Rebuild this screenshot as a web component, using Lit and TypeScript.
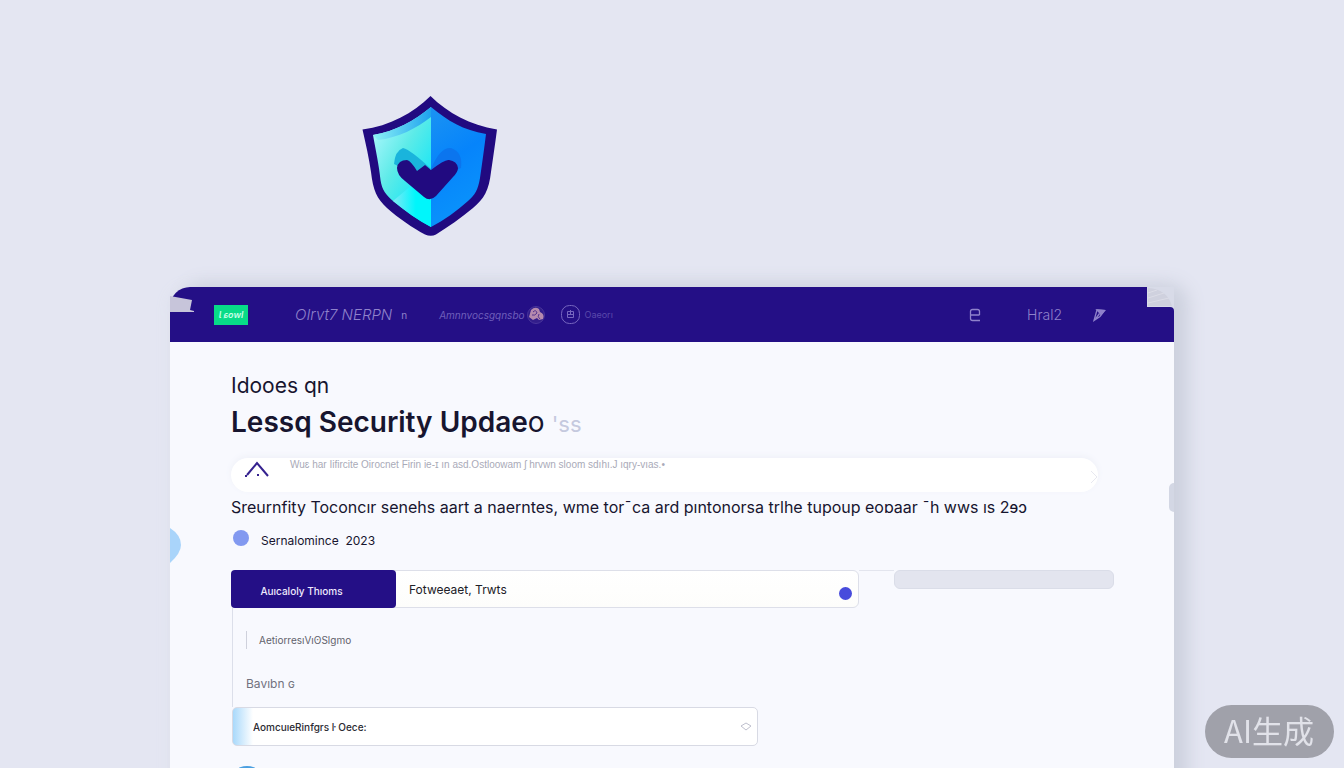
import { LitElement, html, css, svg } from "lit";
import { customElement, state } from "lit/decorators.js";

const shield = svg`
  <defs>
    <linearGradient id="left" x1="0" y1="0.2" x2="0.7" y2="1">
      <stop offset="0" stop-color="#a9f6fb"></stop>
      <stop offset="0.45" stop-color="#5cebe8"></stop>
      <stop offset="1" stop-color="#08e4f8"></stop>
    </linearGradient>
    <linearGradient id="right" x1="0" y1="0" x2="0.3" y2="1">
      <stop offset="0" stop-color="#1b93f2"></stop>
      <stop offset="0.5" stop-color="#0684fb"></stop>
      <stop offset="1" stop-color="#0a93fb"></stop>
    </linearGradient>
    <linearGradient id="rim" x1="0" y1="0" x2="1" y2="0">
      <stop offset="0" stop-color="#8cf3f6"></stop>
      <stop offset="1" stop-color="#1ea2ee"></stop>
    </linearGradient>
    <linearGradient id="facet" x1="0" y1="0" x2="1" y2="0">
      <stop offset="0" stop-color="#7fe9f6"></stop>
      <stop offset="0.6" stop-color="#00f6fb"></stop>
    </linearGradient>
  </defs>
  <path fill="#210a80" d="M68.500 0C86 17 108 29 135 33.500C133 49 131 62 129 76C127 94 122 103 111 112C99 122 86 131 74 138.500Q69 141 63 138.500C51 132 36 122 25 112C15 103 11 94 9 76C7 62 4 49 0.500 33.500C28 30 51 17 68.500 0Z"></path>
  <path fill="url(#left)" d="M69 11C52 25 34 35 11 39C14 56 17 69 18.500 84C20 94 24 99 31 105C43 115 56 124 69 131Z"></path>
  <path fill="url(#rim)" d="M69 11C52 25 34 35 11 39L16 44C36 42 55 32 69 21Z"></path>
  <path fill="url(#facet)" d="M69 73L31 105C43 115 56 124 69 131Z"></path>
  <path fill="url(#right)" d="M69 11C86 25 101 34 124 38C122 54 120 68 118 82C116 94 113 99 106 105C95 115 82 124 69 131Z"></path>
  <path fill="#1ab4dc" d="M32 68Q33 55 41 52Q49 54 69 73L58 80L36 70Z"></path>
  <path fill="#0b75ee" d="M69 73Q78 51 89 52Q101 56 99 72L80 80Z"></path>
  <path fill="#210a80" d="M35 72Q36 64 45 64Q49 65 55 75L63 69L69 74Q83 63 87 64Q95 65 96 72Q96 76 91 81L74 100Q68 106 62 101L43 85Q35 79 35 72Z"></path>
`;

@customElement("app-root")
export class AppRoot extends LitElement {
  @state() private query = "Fotweeaet, Trwts";

  static styles = css`
    :host {
      display: block;
      height: 100vh;
      overflow: hidden;
      background: #e4e6f2;
      color: #17152f;
      font-family: Inter, "Noto Sans", sans-serif;
    }
    * {
      box-sizing: border-box;
    }
    .page {
      padding: 96px 170px 0 170px;
    }
    .hero {
      padding-left: 192px;
      margin-bottom: 51px;
    }
    .shield {
      display: block;
      width: 136px;
      height: 140px;
    }
    .card {
      position: relative;
      min-height: 600px;
      background: #f8f9fe;
      border-radius: 20px 20px 0 0;
      box-shadow: 14px -4px 18px #cdd1de, 0 0 16px #dfe2ed;
    }
    .bar {
      position: relative;
      display: flex;
      align-items: center;
      height: 55px;
      padding: 0 68px 0 44px;
      background: #240f86;
      border-radius: 20px 0 0 0;
      color: #8f82cb;
    }
    .tape {
      position: absolute;
      left: 0;
      top: 9px;
      width: 24px;
      height: 16px;
    }
    .corner {
      position: absolute;
      right: 0;
      top: 0;
      width: 27px;
      height: 24px;
    }
    .badge {
      width: 34px;
      height: 20px;
      background: #08dc88;
      color: #c8ffe8;
      font-size: 9px;
      font-style: italic;
      font-weight: 600;
      line-height: 20px;
      text-align: center;
    }
    .link {
      color: inherit;
      text-decoration: none;
      white-space: nowrap;
    }
    .brand {
      margin-left: 47px;
      font-size: 15px;
      font-weight: 300;
      font-style: italic;
    }
    .mark {
      margin-left: 9px;
      font-size: 10px;
    }
    .news {
      margin-left: 32px;
      color: #6f5fbb;
      font-size: 10px;
      font-style: italic;
    }
    .avatar {
      width: 18px;
      height: 18px;
      margin: 0 16px 0 2px;
    }
    .account {
      display: flex;
      align-items: center;
      gap: 5px;
      color: #5a49ab;
      font-size: 9px;
    }
    .ring {
      width: 19px;
      height: 19px;
    }
    .tools {
      display: flex;
      align-items: center;
      margin-left: auto;
      font-size: 14px;
      font-weight: 300;
    }
    .tool {
      display: flex;
      padding: 0;
      border: 0;
      background: none;
      color: inherit;
    }
    .tool svg {
      width: 14px;
      height: 14px;
    }
    .plan {
      margin: 0 30px 0 46px;
    }
    .body {
      padding: 30px 60px 0 61px;
    }
    .eyebrow {
      margin: 0;
      font-size: 21px;
      font-weight: 400;
      line-height: 28px;
    }
    .title {
      margin: 4px 0 16px;
      font-size: 28px;
      font-weight: 600;
      line-height: 36px;
    }
    .thin {
      font-weight: 400;
    }
    .faded {
      color: #c5c9de;
      font-weight: 400;
      font-size: 22px;
    }
    .notice {
      display: flex;
      align-items: flex-start;
      gap: 20px;
      height: 34px;
      margin-right: 16px;
      padding: 0 0 0 13px;
      background: #ffffff;
      border-radius: 17px;
      box-shadow: 0 -2px 6px #eff1f8;
      color: #a9aab8;
      font-family: "Liberation Sans", sans-serif;
      font-size: 10px;
      line-height: 14px;
    }
    .peak {
      width: 26px;
      height: 20px;
      margin-top: 3px;
    }
    .next {
      width: 8px;
      height: 14px;
      margin: 12px 0 0 auto;
    }
    .lead {
      margin: 3px 0 10px;
      font-size: 16px;
      line-height: 24px;
      white-space: nowrap;
    }
    .date {
      display: flex;
      align-items: center;
      gap: 11px;
      margin-bottom: 17px;
      font-size: 12px;
      line-height: 24px;
    }
    .dot {
      width: 16px;
      height: 16px;
      margin: 0 1px 6px 2px;
      border-radius: 50%;
      background: #8299f0;
    }
    .row {
      display: flex;
      align-items: flex-start;
    }
    .group {
      position: relative;
      display: flex;
      flex: 1;
      height: 38px;
      border: 1px solid #dddfe9;
      border-radius: 6px;
      background: linear-gradient(#ffffff, #fdfdfb);
    }
    .tab {
      width: 165px;
      margin: -1px 0 -1px -1px;
      padding: 4px 24px 0 0;
      border: 0;
      border-radius: 4px;
      background: #240f86;
      color: #eeeafd;
      font: 500 10px Inter, sans-serif;
    }
    .query {
      flex: 1;
      min-width: 0;
      padding: 0 40px 0 13px;
      border: 0;
      background: none;
      color: #202027;
      font: 400 12px Inter, sans-serif;
    }
    .status {
      position: absolute;
      right: 6px;
      bottom: 7px;
      width: 13px;
      height: 13px;
      border-radius: 50%;
      background: #474bdc;
    }
    .joint {
      width: 35px;
      border-top: 1px solid #e3e5ee;
    }
    .meter {
      width: 220px;
      height: 19px;
      border: 1px solid #dadde8;
      border-radius: 6px;
      background: #e3e5ef;
    }
    .list {
      margin: 0 0 0 1px;
      padding: 20px 0 11px 13px;
      border-left: 1px solid #dcdfea;
      list-style: none;
      color: #72727e;
      line-height: 24px;
    }
    .entry {
      font-size: 12px;
    }
    .entry + .entry {
      margin-top: 20px;
    }
    .nested {
      display: flex;
      align-items: center;
      gap: 12px;
      font-size: 10px;
      color: #62626c;
    }
    .rule {
      width: 1px;
      height: 18px;
      background: #cfd1dc;
    }
    .picker {
      position: relative;
      max-width: 526px;
      margin-left: 1px;
    }
    .select {
      display: block;
      width: 100%;
      height: 39px;
      padding: 0 40px 0 20px;
      border: 1px solid #d8dae4;
      border-radius: 5px;
      appearance: none;
      background: linear-gradient(90deg, #a9d9fb, #ffffff 20px);
      color: #2b2b33;
      font: 500 10px Inter, sans-serif;
    }
    .gem {
      position: absolute;
      right: 6px;
      top: 15px;
      width: 12px;
      height: 9px;
      pointer-events: none;
    }
    .orb {
      width: 36px;
      height: 36px;
      margin: 20px 0 0 -2px;
      border-radius: 50%;
      background: #4b9fe0;
    }
    .drop {
      position: absolute;
      left: 0;
      top: 241px;
      width: 12px;
      height: 36px;
    }
    .handle {
      position: absolute;
      right: 0;
      top: 196px;
      width: 5px;
      height: 29px;
      border-radius: 5px 0 0 5px;
      background: #d3d7e4;
    }
    .stamp {
      position: fixed;
      right: 10px;
      bottom: 10px;
      padding: 0 20px 4px 19px;
      border-radius: 27px;
      background: #a0a1aa;
      color: #e1e2e9;
      font: 400 31px/49px "Noto Sans CJK SC", sans-serif;
    }
  `;

  render() {
    return html`
      <div class="page">
        <header class="hero">
          <svg class="shield" viewBox="0 0 136 140" aria-hidden="true">${shield}</svg>
        </header>
        <main class="card">
          <nav class="bar">
            <svg class="tape" viewBox="0 0 24 16" aria-hidden="true">
              <path fill="#c7c5da" d="M0 0L22 4L20 14L24 15V16H0Z"></path>
            </svg>
            <span class="badge">Ɩ ɕowl</span>
            <a class="link brand" href="#home">OIrvt7 NERPN</a>
            <span class="mark">n</span>
            <a class="link news" href="#news">Amnnvocsgqnsbo</a>
            <svg class="avatar" viewBox="0 0 18 18" aria-hidden="true">
              <circle cx="9" cy="9" r="8.500" fill="#321d8b" stroke="#49359b"></circle>
              <path fill="#b58aae" d="M2 11L4 4Q8 0 12 3L13 6Q18 8 16 13L12 14L10 12L6 14Z"></path>
              <path fill="none" stroke="#54338d" d="M6 6Q9 3 10 7Q8 10 5 9M12 8Q10 11 13 13"></path>
            </svg>
            <a class="link account" href="#account">
              <svg class="ring" viewBox="0 0 19 19" fill="none" stroke="#7666bf" aria-hidden="true">
                <rect x="0.500" y="0.500" width="18" height="18" rx="8"></rect>
                <path d="M6.500 6.500H12.500V12.500H6.500ZM6.500 9.500H12.500M9.500 5V9.500"></path>
              </svg>
              Oaeorı
            </a>
            <div class="tools">
              <button class="tool" aria-label="Menu">
                <svg viewBox="0 0 14 14" fill="none" stroke="currentColor" stroke-width="1.300">
                  <path d="M13 12.500H5.500Q3.500 12.500 3.500 10.500V3.500Q3.500 1.500 5.500 1.500H10.500Q12.500 1.500 12.500 3.500V7M3.500 7H12.500"></path>
                </svg>
              </button>
              <a class="link plan" href="#plan">Hral2</a>
              <button class="tool" aria-label="Edit">
                <svg viewBox="0 0 14 14" fill="none" stroke="currentColor" stroke-width="1.300">
                  <path fill="currentColor" d="M5 2L12.500 2.500L9 6.500L7 4Z"></path>
                  <path d="M5 2L12.500 2.500L8 8.500L2 12.500ZM7.500 5.500L3.500 11"></path>
                </svg>
              </button>
            </div>
            <svg class="corner" viewBox="0 0 27 24" aria-hidden="true">
              <path fill="#d8dbe8" d="M0 0H27V24Q27 20 23 20H0Z"></path>
              <path fill="#cfd1de" d="M1 1Q20 2 25 19H1Z"></path>
              <path fill="none" stroke="#dcdde7" d="M1 6L10 3M1 11L17 6M1 16L22 11"></path>
            </svg>
          </nav>
          <section class="body">
            <p class="eyebrow">Idooes qn</p>
            <h1 class="title">Lessq Security Updae<span class="thin">o</span> <span class="faded">'ss</span></h1>
            <div class="notice">
              <svg class="peak" viewBox="0 0 26 20" fill="none" aria-hidden="true">
                <path stroke="#35228f" stroke-width="2" d="M3 14L13 2L24 15"></path>
                <path fill="#35228f" d="M1 14H3V16H1ZM13 13H15V15H13Z"></path>
              </svg>
              <span>Wuɛ har Iifircite Oirocnet Firin ie-ɪ ın asd.Ostloowam ʃ hrvwn sloom sdıhı.J ıqry-vıas.•</span>
              <svg class="next" viewBox="0 0 8 14" fill="none" stroke="#e7e8f0" aria-hidden="true">
                <path d="M1 1L7 7L1 13"></path>
              </svg>
            </div>
            <p class="lead">Sreurnfity Toconcır senehs aart a naerntes, wme torˉca ard pıntonorsa trlhe tupoup eoɒaar ˉh wws ıs 2ɘɔ</p>
            <div class="date"><span class="dot"></span><span>Sernalomince&nbsp; 2023</span></div>
            <div class="row">
              <div class="group">
                <button class="tab">Auıcaloly Thıoms</button>
                <input
                  class="query"
                  aria-label="Search"
                  .value=${this.query}
                  @input=${(e: Event) => (this.query = (e.target as HTMLInputElement).value)}
                />
                <span class="status"></span>
              </div>
              <span class="joint"></span>
              <span class="meter"></span>
            </div>
            <ul class="list">
              <li class="entry nested"><span class="rule"></span>AetiorresıVıʘSlgmo</li>
              <li class="entry">Bavıbn ɢ</li>
            </ul>
            <div class="picker">
              <select class="select" aria-label="Category">
                <option>AomcuıeRinfgrs ŀ Oece:</option>
              </select>
              <svg class="gem" viewBox="0 0 12 9" fill="none" stroke="#bfc0ce" aria-hidden="true">
                <path d="M1 4L6 1L11 4L6 8Z"></path>
              </svg>
            </div>
            <div class="orb"></div>
          </section>
          <svg class="drop" viewBox="0 0 12 36" aria-hidden="true">
            <path fill="#a9d4fa" d="M0 0Q11 7 11 17Q11 25 0 35Z"></path>
          </svg>
          <span class="handle"></span>
        </main>
      </div>
      <div class="stamp">AI生成</div>
    `;
  }
}
